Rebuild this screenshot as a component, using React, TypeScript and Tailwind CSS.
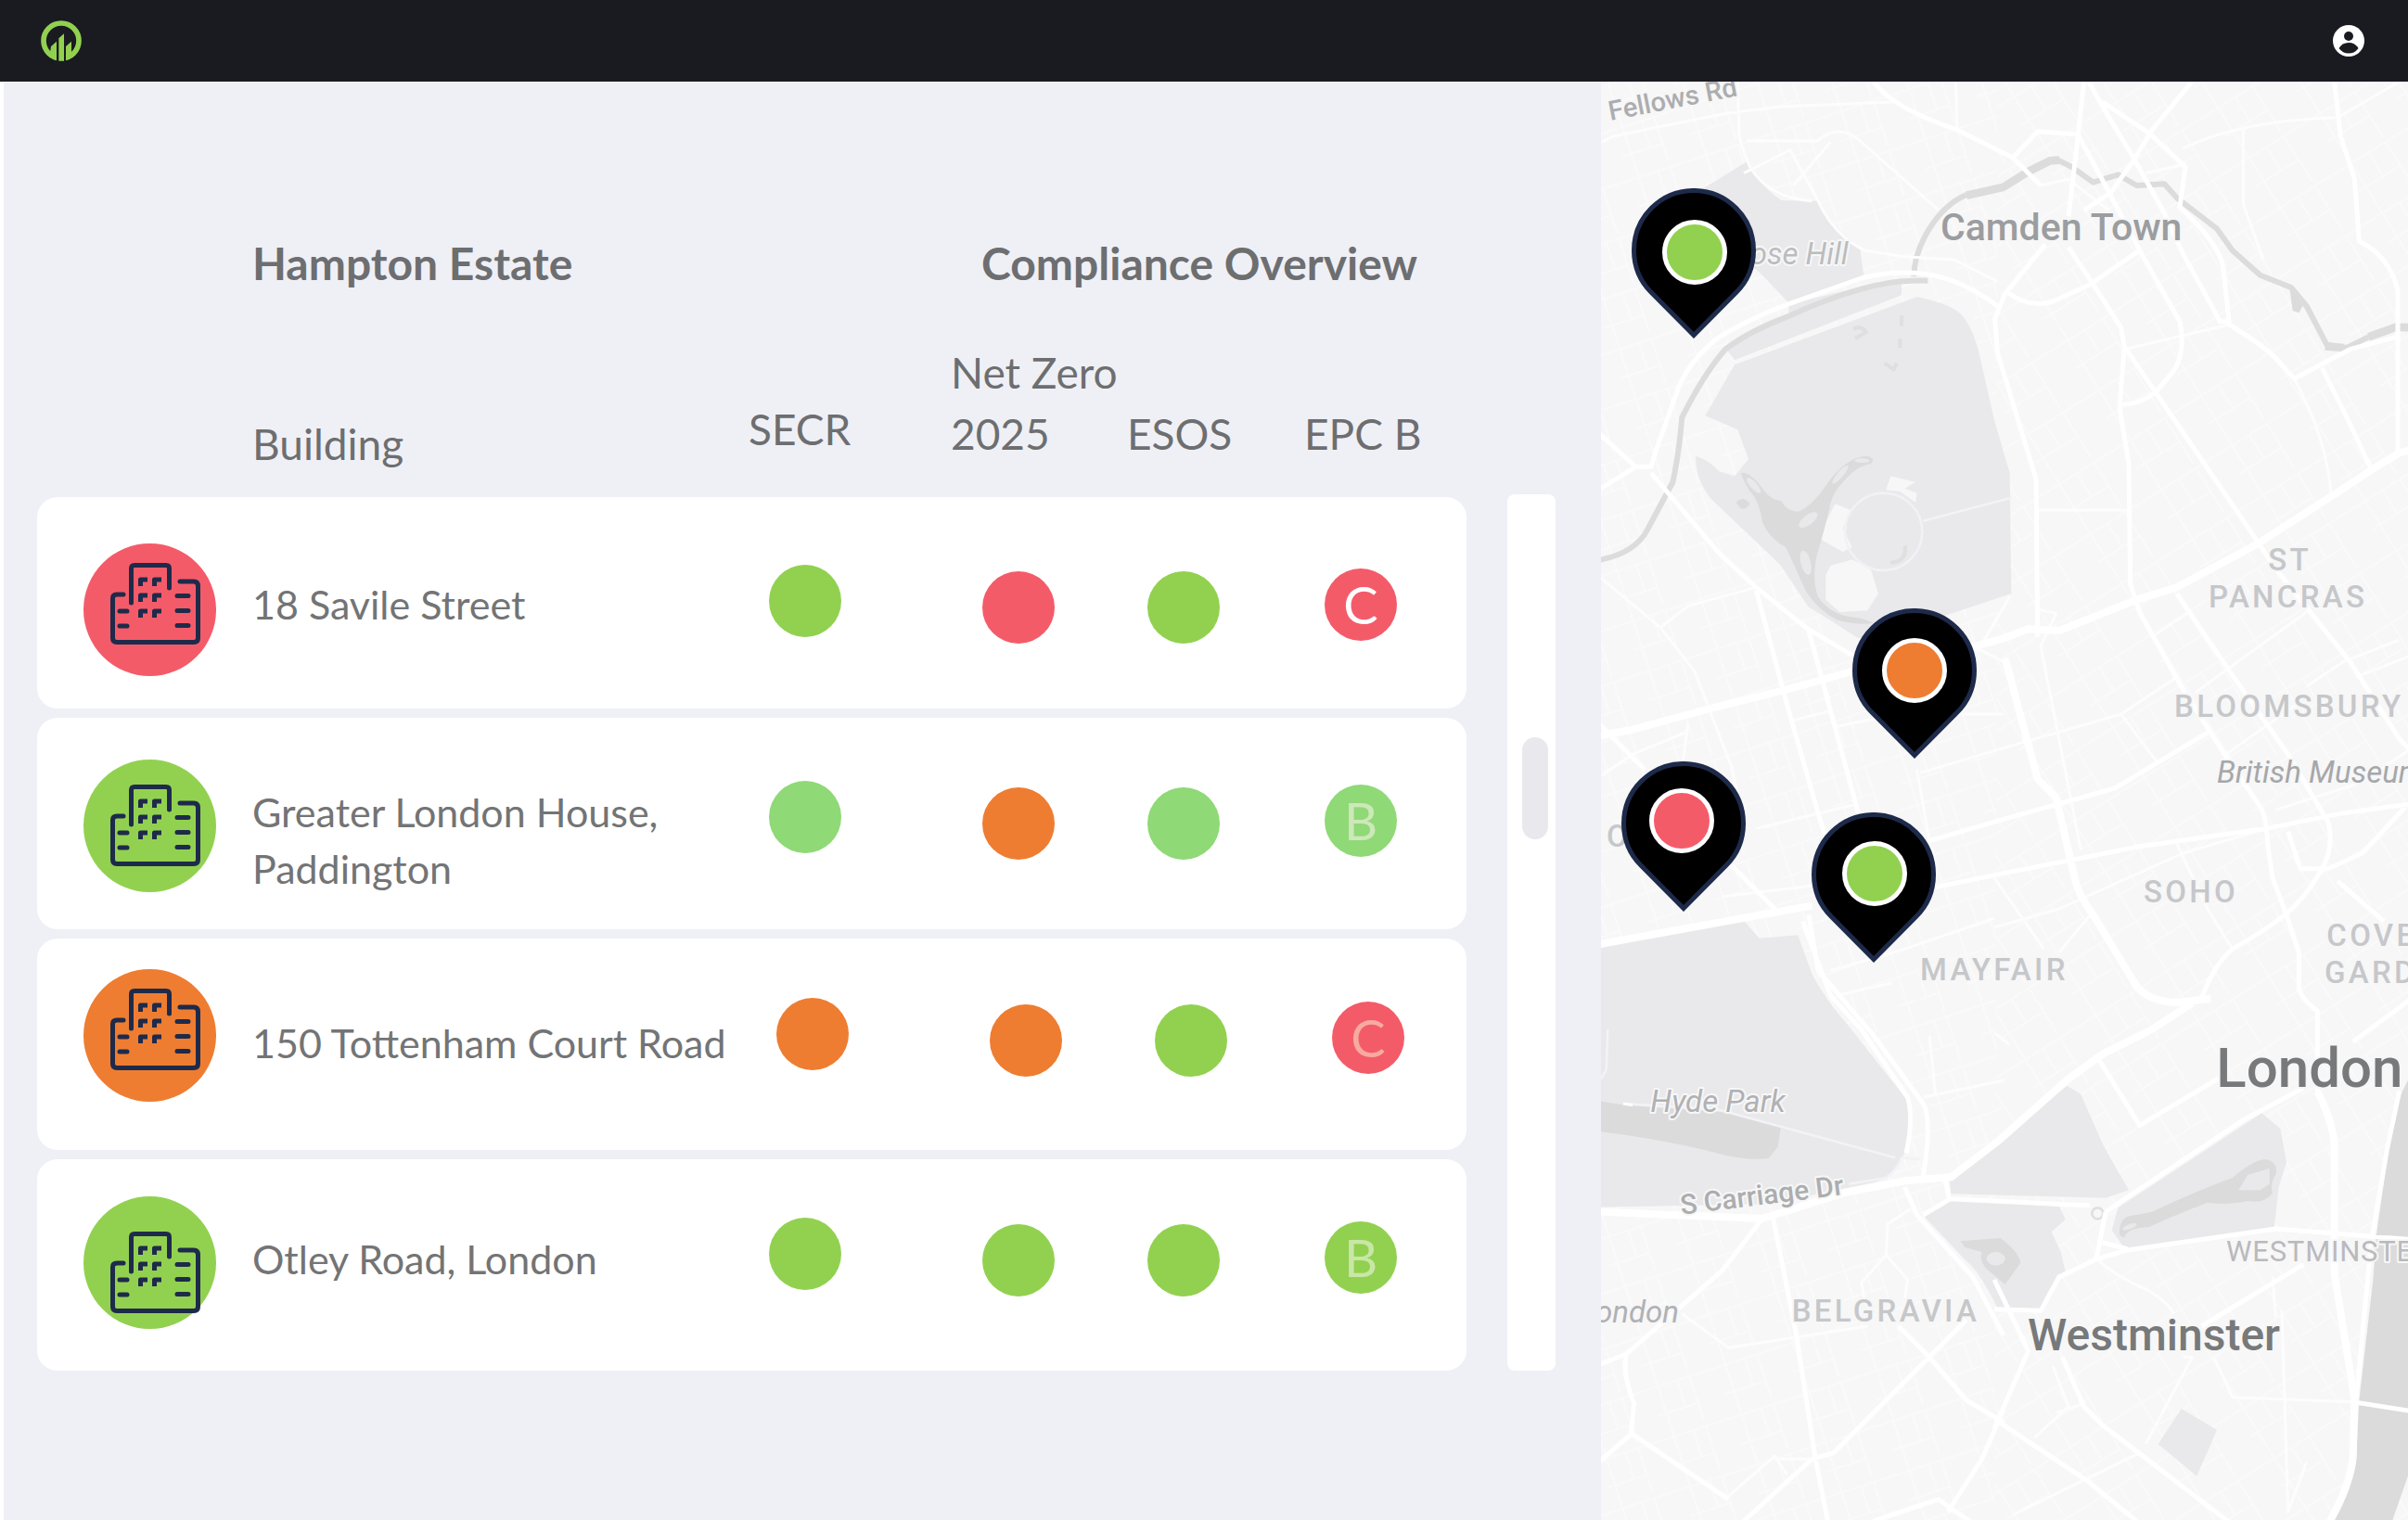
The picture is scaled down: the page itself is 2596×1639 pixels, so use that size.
import clsx from "clsx";

type Status = { tone: string; letter?: string; letterTone?: string };

type Building = {
  name: string[];
  tone: string;
  glyphY: number;
  row: string;
  iconCell: string;
  nameCell: string;
  secr: Status;
  netZero: Status;
  esos: Status;
  epc: Status;
};

const GREEN = "bg-[#92d150]";
const MINT = "bg-[#8fd976]";
const RED = "bg-[#f45b69]";
const ORANGE = "bg-[#ee7d31]";

const rowGrid = "grid grid-cols-[232px_1fr_230px_178px_191px_160px]";

const buildings: Building[] = [
  {
    name: ["18 Savile Street"],
    tone: "#f45b69",
    glyphY: 21,
    row: "pt-[10px] pr-[34px]",
    iconCell: "pt-1",
    nameCell: "pb-2",
    secr: { tone: GREEN },
    netZero: { tone: RED },
    esos: { tone: GREEN },
    epc: { tone: RED, letter: "C", letterTone: "text-white" },
  },
  {
    name: ["Greater London House,", "Paddington"],
    tone: "#92d150",
    glyphY: 27,
    row: "pr-[34px]",
    iconCell: "pt-1",
    nameCell: "pt-9",
    secr: { tone: MINT },
    netZero: { tone: ORANGE },
    esos: { tone: MINT },
    epc: { tone: MINT, letter: "B", letterTone: "text-[#cde8b9]" },
  },
  {
    name: ["150 Tottenham Court Road"],
    tone: "#ee7d31",
    glyphY: 21,
    row: "pb-[8px] pr-[26px]",
    iconCell: "pb-3",
    nameCell: "pt-1",
    secr: { tone: ORANGE },
    netZero: { tone: ORANGE },
    esos: { tone: GREEN },
    epc: { tone: RED, letter: "C", letterTone: "text-[#f7aaa2]" },
  },
  {
    name: ["Otley Road, London"],
    tone: "#92d150",
    glyphY: 38,
    row: "pb-[10px] pr-[34px]",
    iconCell: "pt-1",
    nameCell: "pb-1",
    secr: { tone: GREEN },
    netZero: { tone: GREEN },
    esos: { tone: GREEN },
    epc: { tone: GREEN, letter: "B", letterTone: "text-[#c8e7a7]" },
  },
];

const pins = [
  { name: "Otley Road, London", place: "left-[33px] top-[115px]", fill: "#92d150", cx: 68, cy: 69 },
  { name: "150 Tottenham Court Road", place: "left-[271px] top-[568px]", fill: "#ee7d31", cx: 67, cy: 67 },
  { name: "18 Savile Street", place: "left-[22px] top-[733px]", fill: "#f45b69", cx: 65, cy: 64 },
  { name: "Greater London House", place: "left-[227px] top-[788px]", fill: "#92d150", cx: 68, cy: 66 },
];

// Map geometry, drawn in units of a third of a pixel
const parks = [
  "M340 375L490 283Q520 350 600 408L720 410Q750 480 855 560L868 650L630 745L530 640L340 500Z",
  "M420 885L450 925L990 715L990 660Q800 700 625 745L625 780Z",
  "M450 940L1040 720Q1160 745 1190 785Q1225 830 1245 920L1290 1120L1340 1290L1345 1680L1150 1745L850 1825Q720 1740 690 1725Q640 1650 600 1590L570 1560L370 1370Q320 1300 325 1235Q370 1250 400 1285L450 1300L495 1245L460 1150L355 1105Z",
  "M10 2820L480 2738L530 2795L655 2785L700 2910Q740 2990 820 3080L1000 3308Q1020 3330 1015 3400L1000 3490Q960 3570 900 3585L560 3655L10 3665Z",
  "M1525 3272L1570 3300L1640 3460L1725 3610L1650 3635L1150 3622L1145 3570L1290 3465Z",
  "M1065 3697L1140 3641L1500 3662L1520 3705L1475 3745L1505 3810L1520 3874Q1460 3920 1440 4000L1300 3990Q1240 3870 1200 3840Z",
  "M1690 3667L2155 3361L2215 3410L2235 3520L2210 3600L2195 3733L1715 3803L1670 3740Z",
  "M1895 4317L2010 4385L1945 4535L1820 4432Z",
];

const clearings = [
  "M955 1300L1035 1320L1000 1340L1040 1355L1035 1385L985 1350L940 1345Z",
  "M775 1390L825 1410L800 1470L830 1530L800 1545L720 1500Z",
  "M760 1590L830 1570L890 1600L915 1680L880 1735L790 1740L745 1700L745 1620Z",
];

const water = [
  "M470 1290Q500 1285 540 1340Q570 1380 600 1380Q620 1415 655 1415Q700 1400 760 1310Q820 1235 880 1235Q910 1245 890 1260Q840 1270 800 1320Q770 1350 760 1390Q740 1480 715 1560Q700 1640 720 1690Q760 1755 860 1760L900 1775Q850 1785 780 1765Q700 1720 670 1650Q640 1580 615 1530Q560 1500 540 1450Q530 1380 500 1350Q480 1320 470 1290Z",
  "M2245 690L2290 745L2275 772L2255 765Z",
  "M10 3322L100 3335L440 3360L600 3405L590 3470L560 3507Q500 3515 420 3497Q250 3450 10 3420Z",
  "M1180 3775L1310 3765Q1370 3810 1375 3845L1325 3915L1260 3860Q1240 3830 1250 3810L1195 3795Z",
  "M1695 3755Q1690 3690 1750 3690L1800 3680Q1950 3610 2060 3570Q2130 3510 2170 3510Q2210 3520 2200 3560Q2180 3590 2190 3620Q2160 3655 2110 3645Q2050 3660 1980 3650Q1850 3700 1790 3730Q1720 3730 1710 3765Z",
  "M2640 3230L2590 3330L2565 3480L2525 3760L2515 3900L2470 4290L2460 4480Q2450 4570 2375 4700L2570 4700L2640 4500Z",
  "M455 1385Q477 1360 500 1390Q477 1425 455 1385Z",
];

const canals = [
  "M10 1572Q130 1550 170 1470L250 1320Q270 1230 280 1110Q350 970 420 890Q500 830 620 785Q750 725 860 695Q960 665 1075 668",
  "M1030 655Q1030 580 1080 500Q1130 420 1200 390",
  "M2430 885L2365 875L2300 750L2250 690L2150 650L2060 570L2010 500L1880 400L1840 355L1750 360L1690 325L1610 350L1540 300L1490 275",
];

const wideCanals = [
  "M1200 392L1320 365L1400 315L1470 280L1500 278",
  "M2360 880L2420 885",
  "M2500 850L2590 818L2640 820",
];

const arteries = [
  "M10 2140L120 2120L360 2055L620 1990L820 1935L1230 1850L1320 1825L1400 1795L1500 1800L1600 1760L1750 1700L1880 1660L2140 1520L2420 1340L2510 1280L2600 1225L2640 1215",
  "M1325 1890L1430 2280L1490 2340L1550 2600Q1560 2650 1610 2720L1750 2950Q1790 3000 1880 3003L1990 2990",
  "M10 3680L540 3702L800 3620L1000 3580L1150 3568L1310 3445L1530 3250L1640 3170L1800 3090L1930 3005",
  "M2335 3290Q2390 3400 2390 3475L2390 3880L2455 4285L2450 4475Q2440 4570 2370 4690",
  "M10 2815L560 2715L700 2690",
];

const majors = [
  "M10 1345L130 1270L180 1270L195 1220L270 1010Q310 920 400 850Q500 790 620 745L860 660Q950 635 1060 645Q1180 660 1300 750",
  "M900 24Q960 110 1170 180L1320 255L1350 270L1440 360",
  "M10 1160L130 1270M180 1290L400 1550L520 1660L680 1790L830 1880",
  "M1455 550L1325 710L1292 790L1300 900L1425 1310L1430 1820M1325 700Q1400 760 1480 735L1600 680L1760 570",
  "M1580 24L1555 250L1530 460M1530 560L1610 680L1700 820L1710 880L2140 1510L2200 1600L2440 1900L2600 2150L2640 2190",
  "M1595 24Q1630 90 1740 270L1840 450L1900 580L2020 800L2050 800",
  "M1640 90L1790 190L1908 300L1890 430Q2010 540 2030 620L2050 810Q2180 890 2210 930L2260 985L2440 890L2590 850",
  "M1930 24L1800 180L1740 280L1665 385L1580 440",
  "M1350 270L1430 185L1560 195L1660 380L1760 570L1890 800Q1910 900 1870 960L1810 1030Q1760 1070 1690 1070",
  "M1710 890L1695 1080L1725 1260L1730 1650L1760 1740L1900 1990L2035 2200L2150 2370Q2170 2400 2175 2500L2190 2600L2235 2720L2275 2840L2275 2960Q2290 3000 2335 3030L2335 3290",
  "M2390 24L2410 200L2455 340L2470 540Q2570 590 2595 700L2595 1220M2350 950L2430 1110L2510 1280",
  "M1880 1680L2050 1930L2170 2100L2240 2200L2370 2420Q2390 2500 2350 2570Q2300 2660 2230 2720Q2150 2780 2060 2830Q2000 2880 1960 2990",
  "M1100 2630L1320 2585L1550 2540L1750 2500L2170 2440L2420 2390L2640 2360",
  "M10 2100L160 2250M440 2560L590 2710M520 1670L620 2040L720 2390L760 2520M690 1800L850 2390",
  "M1080 2480L1320 2410L1500 2360L1680 2310L1980 2130",
  "M670 2740L760 2980L860 3090L1010 3310Q1030 3380 1005 3490M690 2720L720 2900L900 3110L1060 3330Q1090 3380 1060 3565",
  "M540 3702L410 3870L100 4140L10 4175M100 4140Q85 4200 125 4300L115 4400L10 4490",
  "M575 3702L650 4080L710 4470L755 4700M480 4680L700 4480L770 4460L1090 4140L1200 4030",
  "M1000 3600L1040 3690L1220 3890L1320 4080M1130 3570L1145 3640L1060 3690M1145 3638L1600 3660",
  "M1290 3995L1440 4000L1500 3890L1620 3834L1715 3805L2200 3735L2640 3770M1640 3780L1720 3800M1620 3834L1650 3680",
  "M1650 3680L2100 3380L2290 3280M1630 3190L1760 3400L2030 3240",
  "M1960 4050L2290 3850M1510 4150L1580 4310L1640 4370L2070 4700M1290 4350L1590 4550L1750 4680M1290 4380L1400 4130L1290 3900",
  "M2460 4297L2640 4325M2600 3290L2560 3480L2510 3770L2460 4290M2640 2990L2450 3130",
  "M980 4050L1080 4150L1200 4290L1320 4360M1320 4320L1250 4480L1140 4650M900 4680L1110 4610L1150 4640L1240 4700",
  "M430 4610L120 4400M2370 2570L2480 2520L2620 2370M2240 2450L2280 2570L2370 2570M2400 2610L2550 2740",
];

const minors = [
  "M18 220L60 200L430 125L600 105L960 90M460 24L465 200Q480 260 500 300Q560 400 700 410",
  "M720 410Q770 520 870 570L1000 590L1160 600L1300 670M1165 24L1170 180M490 215L720 215Q780 160 850 210L940 290L1110 440M640 360L760 220",
  "M480 320L630 245L720 410M1780 320L1910 290M1900 240Q2080 150 2400 140L2600 24M2095 170L2095 420L2160 600M1440 360L1530 340L1660 440",
  "M1710 890L2050 810M2260 985Q2370 1190 2380 1370M1430 1410L1730 1410M1290 3100L1340 3140M1430 1730L1490 1745L1440 1850L1570 2510",
  "M18 1630L210 1790L320 1930L440 2240L460 2330M210 1790L300 1720L520 1660M640 2090L760 2060M780 2110L980 2070L1320 2070M1050 2260L1320 2180L1700 2070L1880 1950",
  "M1340 1690L1240 1860L1320 1900M520 2440L850 2360M410 2660L1080 2580M280 2240L300 2100M18 2270L120 2200L290 2130M760 2900L1000 2830L1290 2730M780 2980L960 2940M1040 2250L1080 2480",
  "M1290 2600L1450 2830M1290 2760L1500 2700L1900 2520L2170 2440M1500 2840L1600 2720M1880 2490L1980 2700L2060 2830M1700 2070L1820 2230M1800 1820L1920 1740M1940 2000L2120 1870L2300 1740M2040 2200L2280 2030M2300 1980L2420 1900L2600 1830M2460 1950L2640 1880M2200 2380L2480 2290L2640 2180",
  "M280 4010L430 4120L880 4050M940 3820L860 3910L870 3960M940 3820L1010 3900L1000 3960M940 3820L945 3720L1020 3670M430 4600L580 4470L620 4530M590 4480L700 4480",
  "M1630 3840Q1700 3900 1780 3930Q1850 3970 1870 4010M1480 4180L1530 4310L1420 4410M1580 4300L1490 4330M1900 4150L1930 4150L1780 4430M2000 4150L2060 4280L2460 4295M2220 4000L2240 4650L2300 4490M1350 4660L1760 4460M2190 3890L2200 4020",
  "M1060 3310L1320 3255M1080 3110L1100 3300M90 3330L120 3335",
];

const parkPaths = ["M1060 1445L1345 1370", "M90 3330L400 3350L970 3505", "M40 3090L35 3220L18 3250", "M820 3590L940 3570Q980 3540 990 3505L1050 3510"];

// Faint side streets: one block pattern per district, laid at that district's angle
const districts = [
  { id: "streets-a", rotate: -18, w: 230, h: 170 },
  { id: "streets-b", rotate: -32, w: 270, h: 190 },
];

const labels = [
  { text: "Camden Town", x: 1116, y: 537, look: "text-[123px] font-medium fill-[#9b9da0]" },
  { text: "ST", x: 2176, y: 1605, look: "text-[99px] font-medium tracking-widest fill-[#c6c7ca]" },
  { text: "PANCRAS", x: 1983, y: 1725, look: "text-[99px] font-medium tracking-widest fill-[#c6c7ca]" },
  { text: "BLOOMSBURY", x: 1872, y: 2079, look: "text-[99px] font-medium tracking-widest fill-[#c6c7ca]" },
  { text: "British Museum", x: 2010, y: 2293, look: "text-[99px] italic fill-[#a6a7aa]" },
  { text: "SOHO", x: 1773, y: 2680, look: "text-[99px] font-medium tracking-widest fill-[#c6c7ca]" },
  { text: "COVENT", x: 2365, y: 2820, look: "text-[99px] font-medium tracking-widest fill-[#c6c7ca]" },
  { text: "GARDEN", x: 2358, y: 2940, look: "text-[99px] font-medium tracking-widest fill-[#c6c7ca]" },
  { text: "MAYFAIR", x: 1050, y: 2932, look: "text-[99px] font-medium tracking-widest fill-[#c6c7ca]" },
  { text: "O", x: 36, y: 2500, look: "text-[99px] font-medium tracking-widest fill-[#c6c7ca]" },
  { text: "London", x: 2008, y: 3275, look: "text-[180px] font-medium fill-[#77797a]" },
  { text: "WESTMINSTER", x: 2040, y: 3841, look: "text-[93px] tracking-wide fill-[#b9babd]" },
  { text: "BELGRAVIA", x: 635, y: 4035, look: "text-[99px] font-medium tracking-widest fill-[#c6c7ca]" },
  { text: "Westminster", x: 1398, y: 4127, look: "text-[144px] font-medium fill-[#77797a]" },
  { text: "Hyde Park", x: 178, y: 3358, look: "text-[99px] italic fill-[#b0b1b4]" },
];

function Logo() {
  return (
    <svg viewBox="132 64 132 132" className="size-11" aria-hidden="true">
      <circle cx="198" cy="130" r="57" fill="none" stroke="#92d150" strokeWidth="17" />
      <path d="M183 150H213V198H183Z" fill="#1a1b20" />
      <path d="M165 148L183 132V192L160 182ZM190 122L207 107V195H190ZM213 148L231 132V165L236 182L213 192Z" fill="#92d150" />
    </svg>
  );
}

function Avatar() {
  return (
    <svg viewBox="0 0 34 34" className="size-[34px]" aria-hidden="true">
      <circle cx="17" cy="17" r="17" fill="#fff" />
      <circle cx="17" cy="12" r="5" fill="#1a1b20" />
      <path d="M6.500 25Q10 19 17 19T27.500 25Q23.500 30.500 17 30.500T6.500 25Z" fill="#1a1b20" />
    </svg>
  );
}

function BuildingIcon({ tone, glyphY }: { tone: string; glyphY: number }) {
  return (
    <svg viewBox="0 0 143 143" className="size-[143px]" aria-hidden="true">
      <circle cx="71.5" cy="71.5" r="71.5" fill={tone} />
      <svg x="29" y={glyphY} width="97" height="88" viewBox="0 0 97 88">
        <g fill="none" stroke="#1e2a4a" strokeWidth="5" strokeLinecap="round" strokeLinejoin="round">
          <path d="M14 34H7Q2.500 34 2.500 38V81Q2.500 85.500 7 85.500H90Q94.500 85.500 94.500 81V25Q94.500 20 90 20H75" />
          <path d="M22.500 43V6Q22.500 2.500 26 2.500H60Q63.500 2.500 63.500 6V27" />
          <path d="M72 35.500H84M72 51.500H84M72 67.500H84M10 52H18M10 68H18" />
        </g>
        <path
          d="M32.500 25V18H40M47.500 25V18H55M32.500 42V35H40M47.500 42V35H55M32.500 59V52H40M47.500 59V52H55"
          fill="none"
          stroke="#1e2a4a"
          strokeWidth="5"
          strokeLinejoin="round"
        />
      </svg>
    </svg>
  );
}

function Dot({ tone, letter, letterTone }: Status) {
  return (
    <span className={clsx("flex size-[78px] items-center justify-center rounded-full text-[56px] leading-none", tone, letterTone)}>
      {letter}
    </span>
  );
}

function ComplianceTable() {
  return (
    <table className="block flex-1 text-left text-[#6d6e70]">
      <thead className="block leading-[66px]">
        <tr className={clsx(rowGrid, "h-[116px] items-start pr-[34px] text-[48px] whitespace-nowrap")}>
          <th className="col-start-2 font-bold">Hampton Estate</th>
          <th className="col-start-4 pl-[40px] font-bold">Compliance Overview</th>
        </tr>
        <tr className={clsx(rowGrid, "h-[169px] items-end pr-[34px] text-[46px] whitespace-nowrap")}>
          <th className="col-start-2 pb-[24px] font-normal">Building</th>
          <th className="pb-[40px] pl-[19px] font-normal">SECR</th>
          <th className="pb-[35px] pl-[7px] font-normal">
            Net Zero
            <br />
            2025
          </th>
          <th className="pb-[35px] pl-[19px] font-normal">ESOS</th>
          <th className="pb-[35px] pl-[19px] font-normal">EPC B</th>
        </tr>
      </thead>
      <tbody className="flex flex-col gap-[10px]">
        {buildings.map((b) => (
          <tr key={b.name[0]} className={clsx(rowGrid, "h-[228px] items-center rounded-[22px] bg-white", b.row)}>
            <td className={clsx("pl-[50px]", b.iconCell)}>
              <BuildingIcon tone={b.tone} glyphY={b.glyphY} />
            </td>
            <td className={clsx("text-[43px] leading-[61px] whitespace-nowrap text-[#737475]", b.nameCell)}>
              {b.name.map((line) => (
                <span key={line} className="block">
                  {line}
                </span>
              ))}
            </td>
            <td className="pb-[14px] pl-[41px]">
              <Dot {...b.secr} />
            </td>
            <td className="pl-[41px]">
              <Dot {...b.netZero} />
            </td>
            <td className="pl-[41px]">
              <Dot {...b.esos} />
            </td>
            <td className="pb-[6px] pl-[41px]">
              <Dot {...b.epc} />
            </td>
          </tr>
        ))}
      </tbody>
    </table>
  );
}

function Lines({ paths, width, color }: { paths: string[]; width: number; color: string }) {
  return <path d={paths.join("")} fill="none" stroke={color} strokeWidth={width} strokeLinejoin="round" />;
}

function CityMap() {
  return (
    <svg
      viewBox="18 24 2610 4653"
      preserveAspectRatio="xMinYMin slice"
      className="absolute inset-0 h-full w-full font-['Roboto',sans-serif]"
    >
      <defs>
        {districts.map((d) => (
          <pattern
            key={d.id}
            id={d.id}
            width={d.w}
            height={d.h}
            patternUnits="userSpaceOnUse"
            patternTransform={`rotate(${d.rotate})`}
          >
            <path
              d={`M0 20H${d.w}M0 110H${d.w * 0.6}M30 0V${d.h}M95 20V110M${d.w * 0.6} 20V${d.h}`}
              fill="none"
              stroke="#fafafa"
              strokeWidth="6"
            />
          </pattern>
        ))}
      </defs>
      <path d="M0 0H2700V4700H0Z" fill="#f7f7f7" />
      <path d="M0 0H1300V2900L1290 4700H0Z" fill="url(#streets-a)" />
      <path d="M1300 0H2700V4700H1290Z" fill="url(#streets-b)" />
      <path d={parks.join("")} fill="#e9e9eb" />
      <path d={clearings.join("")} fill="#f7f7f7" />
      <path d={water.join("")} fill="#dbdbdb" />
      <g fill="#e9e9eb">
        <ellipse cx="512" cy="1330" rx="32" ry="11" transform="rotate(48 512 1330)" />
        <ellipse cx="688" cy="1442" rx="36" ry="16" transform="rotate(-38 688 1442)" />
        <ellipse cx="792" cy="1295" rx="38" ry="10" transform="rotate(-50 792 1295)" />
        <ellipse cx="862" cy="1250" rx="24" ry="7" />
        <ellipse cx="680" cy="1580" rx="16" ry="40" transform="rotate(-14 680 1580)" />
        <ellipse cx="1295" cy="3832" rx="30" ry="22" />
        <ellipse cx="1728" cy="3728" rx="24" ry="8" transform="rotate(-20 1728 3728)" />
        <path d="M2080 3610L2110 3560L2180 3540L2180 3590L2150 3610Z" />
      </g>
      <Lines
        paths={["M835 825Q860 810 875 835L840 855", "M990 780V815", "M985 855V885", "M935 935L965 955L975 935", "M1000 1525Q1010 1575 955 1580"]}
        width={12}
        color="#dfdfe0"
      />
      <circle cx="932" cy="1480" r="125" fill="none" stroke="#f1f1f6" strokeWidth="8" />
      <circle cx="1624" cy="3685" r="18" fill="none" stroke="#dfdfe0" strokeWidth="8" />
      <Lines paths={parkPaths} width={8} color="#f2f2f7" />
      <Lines paths={canals} width={18} color="#dcdcdc" />
      <Lines paths={wideCanals} width={26} color="#dcdcdc" />
      <Lines paths={["M2430 885L2500 850"]} width={18} color="#dcdcdc" />
      <Lines paths={minors} width={9} color="#fdfdfd" />
      <Lines paths={majors} width={15} color="#ffffff" />
      <Lines paths={arteries} width={24} color="#ffffff" />
      <g stroke="#f7f7f7" strokeWidth="12" strokeLinejoin="round" className="[paint-order:stroke]">
        {labels.map((l) => (
          <text key={l.text} x={l.x} y={l.y} className={l.look}>
            {l.text}
          </text>
        ))}
        <text x="818" y="615" textAnchor="end" className="fill-[#bbbcbf] text-[99px] italic">
          Primrose Hill
        </text>
        <text x="270" y="4039" textAnchor="end" className="fill-[#b0b1b4] text-[99px] italic">
          London
        </text>
        <text transform="translate(48 150) rotate(-11)" className="fill-[#acadaf] text-[87px] font-medium">
          Fellows Rd
        </text>
        <text transform="translate(278 3689) rotate(-7)" className="fill-[#acadaf] text-[90px] font-medium">
          S Carriage Dr
        </text>
      </g>
    </svg>
  );
}

export default function App() {
  return (
    <div className="flex min-h-screen flex-col bg-white font-['Lato',sans-serif]">
      <header className="flex h-[88px] items-center justify-between bg-[#1a1b20] pr-[47px] pl-11">
        <a href="#" aria-label="Home">
          <Logo />
        </a>
        <button type="button" aria-label="Account">
          <Avatar />
        </button>
      </header>

      <main className="grid flex-1 grid-cols-[1726fr_870fr]">
        <section className="flex items-start border-l-4 border-white bg-[#eff0f6] pt-[163px] pr-[49px] pl-[36px]">
          <div className="flex flex-1 gap-11">
            <ComplianceTable />
            {/* Scroll track */}
            <div className="mt-[282px] w-[52px] rounded-lg bg-white pt-[262px] pl-4">
              <div className="h-[110px] w-7 rounded-full bg-[#e9e9ed]" />
            </div>
          </div>
        </section>

        <section className="relative overflow-hidden" aria-label="Map">
          <CityMap />
          {pins.map((pin) => (
            <button key={pin.name} type="button" aria-label={pin.name} className={clsx("absolute", pin.place)}>
              <svg viewBox="0 0 134 162" className="h-[162px] w-[134px]">
                <path
                  d="M67 158.500L21.400 112.600A64.500 64.500 0 1 1 112.600 112.600Z"
                  fill="#000"
                  stroke="#1e2a4a"
                  strokeWidth="5"
                />
                <circle cx={pin.cx} cy={pin.cy} r="32.5" fill={pin.fill} stroke="#fff" strokeWidth="5" />
              </svg>
            </button>
          ))}
        </section>
      </main>
    </div>
  );
}
